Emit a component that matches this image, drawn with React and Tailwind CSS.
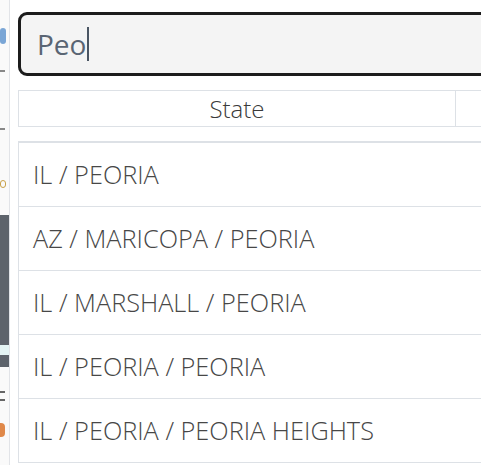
import React from "react";

const rows = [
  "IL / PEORIA",
  "AZ / MARICOPA / PEORIA",
  "IL / MARSHALL / PEORIA",
  "IL / PEORIA / PEORIA",
  "IL / PEORIA / PEORIA HEIGHTS",
];

function SideStrip() {
  // bit of the page behind the popup, cut off at the left edge
  return (
    <div className="w-[10px] h-[465px] shrink-0 border-r border-[#e2e4e8] bg-[#fafafa] flex flex-col">
      <div className="h-[28px]" />
      <div className="h-[16px] w-[6px] bg-[#7aa6d6] rounded-sm" />
      <div className="h-[26px]" />
      <div className="h-[2px] w-[5px] bg-[#888]" />
      <div className="h-[56px]" />
      <div className="h-[2px] w-[5px] bg-[#888]" />
      <div className="h-[50px]" />
      <div className="h-[8px] w-[6px] border border-[#c9a24a] rounded-sm" />
      <div className="h-[27px]" />
      <div className="h-[130px] w-[9px] bg-[#5d636b]" />
      <div className="h-[10px] w-[9px] bg-[#e3f3f3]" />
      <div className="h-[12px] w-[9px] bg-[#5d636b]" />
      <div className="h-[24px]" />
      <div className="h-[2px] w-[5px] bg-[#666]" />
      <div className="h-[6px]" />
      <div className="h-[2px] w-[5px] bg-[#666]" />
      <div className="h-[22px]" />
      <div className="h-[14px] w-[5px] bg-[#e0894a] rounded-r" />
    </div>
  );
}

export default function App() {
  return (
    <div
      className="flex w-[481px] h-[465px] overflow-hidden bg-white"
      style={{ fontFamily: '"Open Sans", "Noto Sans", sans-serif' }}
    >
      <SideStrip />
      <div className="pl-[8px] pt-[12px] w-[540px] shrink-0">
        <div className="h-[64px] border-[3px] border-[#1c1c1c] rounded-[9px] bg-[#f4f4f4] flex items-center pl-[16px]">
          <span className="text-[28px] text-[#5a6573] leading-none">Peo</span>
          <span className="w-[2px] h-[34px] bg-[#4a5563] ml-[1px]" />
        </div>

        <div className="mt-[14px] h-[37px] flex border border-[#dde1e6]">
          <div className="w-[437px] border-r border-[#dde1e6] flex items-center justify-center text-[24px] font-light text-[#3a3a3a]">
            State
          </div>
          <div className="flex-1" />
        </div>

        <div className="mt-[14px] border-t-2 border-l border-[#dde1e6]">
          {rows.map((r) => (
            <div
              key={r}
              className="h-[64px] border-b border-[#dde1e6] flex items-center pl-[14px] text-[25.3px] font-light text-[#474747]"
            >
              {r}
            </div>
          ))}
        </div>
      </div>
    </div>
  );
}
